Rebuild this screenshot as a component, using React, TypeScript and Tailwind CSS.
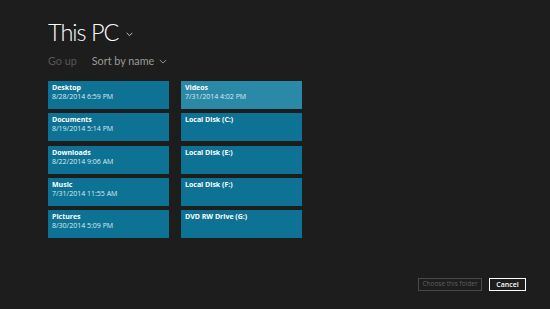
import React from "react";

const left = [
  { name: "Desktop", date: "8/28/2014 6:59 PM" },
  { name: "Documents", date: "8/19/2014 5:14 PM" },
  { name: "Downloads", date: "8/22/2014 9:06 AM" },
  { name: "Music", date: "7/31/2014 11:55 AM" },
  { name: "Pictures", date: "8/30/2014 5:09 PM" },
];
const right = [
  { name: "Videos", date: "7/31/2014 4:02 PM", hot: true },
  { name: "Local Disk (C:)", date: "" },
  { name: "Local Disk (E:)", date: "" },
  { name: "Local Disk (F:)", date: "" },
  { name: "DVD RW Drive (G:)", date: "" },
];

function Tile({ name, date, hot }: { name: string; date: string; hot?: boolean }) {
  return (
    <div
      className={`h-[28px] w-[121px] px-[4px] pt-[3px] leading-none ${
        hot ? "bg-[#2b89a8]" : "bg-[#0e7294]"
      }`}
    >
      <div className="text-[7px] font-bold text-white">{name}</div>
      {date && <div className="mt-[2px] text-[7px] text-[#d9ecf2]">{date}</div>}
    </div>
  );
}

function Chevron({ size, color }: { size: number; color: string }) {
  return (
    <svg width={size} height={size / 2 + 1} viewBox="0 0 10 6" fill="none">
      <path d="M1 1 L5 5 L9 1" stroke={color} strokeWidth="1.2" />
    </svg>
  );
}

export default function App() {
  return (
    <div
      className="relative h-[309px] w-[550px] overflow-hidden bg-[#1d1d1d]"
      style={{ fontFamily: '"Open Sans", "Noto Sans", sans-serif' }}
    >
      <div className="flex flex-col pl-[48px] pt-[17px]">
        <div className="flex items-center gap-[8px]" style={{ fontFamily: 'Lato, "Open Sans", sans-serif' }}>
          <span className="text-[23.5px] font-light leading-[30px] tracking-[-1px] text-white">This PC</span>
          <span className="mt-[5px]">
            <Chevron size={7} color="#e0e0e0" />
          </span>
        </div>
        <div
          className="mt-[7px] flex items-center text-[10.8px] leading-[14px]"
          style={{ fontFamily: 'Lato, "Open Sans", sans-serif' }}
        >
          <span className="text-[#575757]">Go up</span>
          <span className="ml-[15px] text-[#9a9a9a]">Sort by name</span>
          <span className="ml-[5px] mt-[1px]">
            <Chevron size={8} color="#9a9a9a" />
          </span>
        </div>
        <div className="mt-[13px] flex gap-[12px]">
          <div className="flex flex-col gap-[4.25px]">
            {left.map((t) => (
              <Tile key={t.name} {...t} />
            ))}
          </div>
          <div className="flex flex-col gap-[4.25px]">
            {right.map((t) => (
              <Tile key={t.name} {...t} />
            ))}
          </div>
        </div>
      </div>
      <div className="absolute left-[418px] top-[278px] flex gap-[7px]">
        <div className="flex h-[13px] w-[64px] items-center justify-center border border-[#4a4a4a] text-[6.5px] leading-none text-[#5f5f5f]">
          Choose this folder
        </div>
        <div className="flex h-[13px] w-[37px] items-center justify-center border-[1.5px] border-white text-[7px] font-semibold leading-none text-white">
          Cancel
        </div>
      </div>
    </div>
  );
}
